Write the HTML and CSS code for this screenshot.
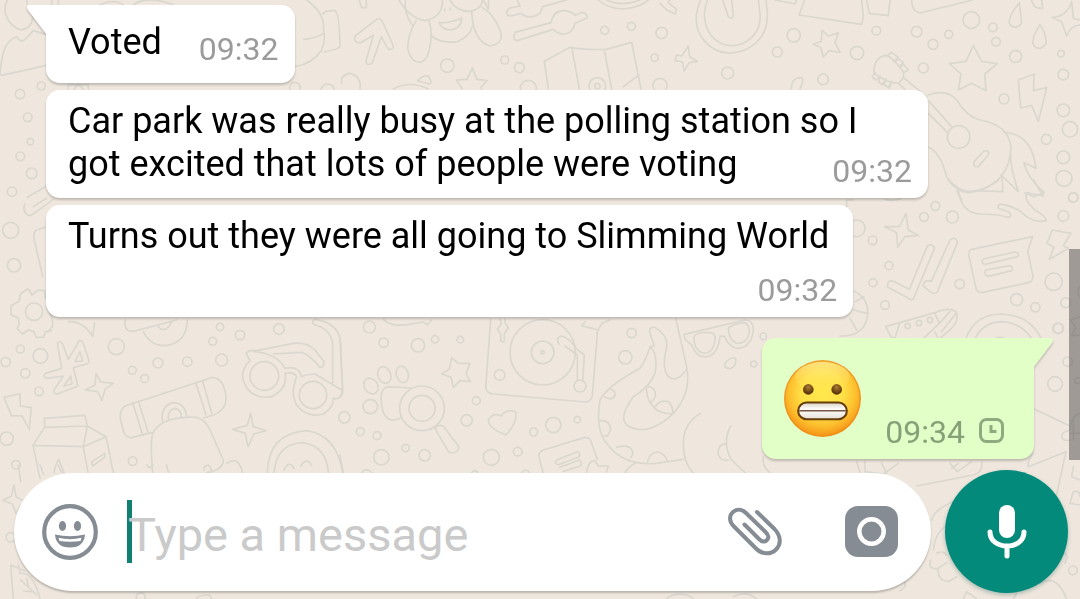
FILE: index.html
```html
<!DOCTYPE html>
<html lang="en">
<head>
<meta charset="utf-8">
<meta name="viewport" content="width=device-width, initial-scale=1">
<title>Chat</title>
<link rel="stylesheet" href="styles.css">
</head>
<body>
<div class="chat">
<svg class="wallpaper" viewBox="0 0 1080 599" preserveAspectRatio="xMinYMin slice" aria-hidden="true">
  <!-- top left -->
  <g transform="scale(.33333)">
    <path d="M22 0C5 30 20 75 62 90Q98 85 98 45M0 225C5 150 20 120 50 110Q62 130 75 118L100 92L140 104M4 226L140 196M82 592L140 558M75 612Q65 635 85 646Q95 648 105 638L160 598M100 620L140 595M140 680L110 690Q98 698 103 720L128 830M80 0L82 12M155 0V14M175 0V14M300 14Q340 -5 370 14M400 14Q440 -15 520 14"/>
    <path d="M88 870l8 15 18-15 20 2 2 22M88 870l-5-3-22 15-4 22-24 14v26l22 10 2 20-6 12 16 16 18-12 16 4 8 18h22l6-18 18-2M205 965Q250 962 278 1010L284 968M140 920q20 30 18 58l-14 18"/>
    <circle cx="102" cy="935" r="26"/><circle cx="60" cy="282" r="14"/><circle cx="124" cy="258" r="12"/><circle cx="83" cy="352" r="13"/><circle cx="91" cy="425" r="10"/><circle cx="61" cy="469" r="13"/><circle cx="95" cy="520" r="16"/><circle cx="36" cy="575" r="14"/><circle cx="32" cy="691" r="24"/><circle cx="42" cy="796" r="20"/>
    <path d="M205 268v-14h60v14M222 268q12-24 28 0"/>
  </g>
  <!-- top centre -->
  <g transform="translate(280 0) scale(.33333)">
    <path d="M80 0Q135 40 130 85Q138 120 125 150Q100 190 45 200M70 118Q110 115 130 100M128 42Q135 30 165 32Q178 38 180 140Q175 148 132 156M238 0L243 20Q250 28 260 20L258 0"/>
    <path d="M225 108L290 58Q302 52 308 66L340 138Q340 150 325 148L304 110L277 188Q265 200 257 186L280 106L240 129Q224 128 223 114Z"/>
    <path d="M357 0Q390 55 435 62Q490 50 487 0M377 0Q370 40 400 80M408 62Q380 110 384 150Q395 188 420 187Q450 180 453 110Q455 85 447 62M510 0Q530 35 570 34Q605 28 608 0M575 35Q580 125 630 138Q675 130 660 90Q640 40 605 22M455 108Q480 130 530 126Q570 110 577 80M610 0L625 28L626 0M478 68Q510 70 545 54Q545 85 510 90Q485 88 478 68ZM494 27v6M511 25v6"/>
    <path d="M712 0L720 18L690 24Q675 35 682 45Q690 52 722 40Q750 62 780 40L788 20L860 0M705 97L813 68Q820 30 855 32Q878 36 886 46L905 37Q925 40 920 55L885 70Q880 100 848 103Q830 100 820 88L712 122Q695 120 705 97ZM955 0Q980 25 1030 27Q1080 22 1105 0M980 0Q1025 22 1080 0M1140 10L1160 30L1185 42L1190 28L1165 8L1170 0"/>
    <path d="M805 267L793 184L870 142Q910 150 978 148L1055 127L1083 267M876 145L898 267M973 150L995 267M1030 260L1077 225"/>
    <path d="M577 204l14 34 30 4-18 20 2 6M577 204l-16 34-32 2 18 26M340 267Q390 240 445 267M185 250Q180 225 210 220Q245 228 240 268M413 243Q425 225 445 228Q458 248 450 252Z"/>
    <circle cx="502" cy="197" r="20"/><circle cx="674" cy="180" r="12"/><circle cx="718" cy="203" r="15"/><circle cx="974" cy="91" r="12"/><circle cx="1054" cy="79" r="12"/><circle cx="1145" cy="99" r="17"/><circle cx="1124" cy="173" r="11"/><circle cx="952" cy="258" r="25"/><circle cx="952" cy="258" r="8"/><circle cx="745" cy="265" r="24"/><circle cx="1140" cy="256" r="21"/><circle cx="45" cy="263" r="16"/><circle cx="143" cy="272" r="20"/>
  </g>
  <!-- top right -->
  <g transform="translate(680 0) scale(.33333)">
    <path d="M62 0Q30 75 75 125Q120 175 190 152Q265 120 262 40L258 0M82 0Q60 55 92 105Q130 150 185 132Q245 105 240 40L235 0M128 0L145 50Q155 60 160 48L155 0M25 138L29 170L52 184L28 188L12 213L8 186L-15 182L-10 165L5 168ZM285 0L345 12L350 0M374 0L357 45L545 73L550 50L545 0M560 0L568 40L625 47L630 0M695 0Q695 35 720 39L878 0M1055 0Q1060 28 1088 25L1085 0M1018 8Q980 55 990 75Q1010 90 1025 70ZM1080 74Q1050 120 1062 138Q1080 155 1098 132Q1100 105 1080 74Z"/>
    <path d="M1175 5L1180 55L1200 60M1175 5Q1160 50 1116 52L1145 66L1160 108Q1170 78 1200 75M426 90L445 108L475 98L465 128L480 157L447 152L430 171L422 142L399 133L424 124ZM880 136L905 184L952 191L914 222L918 272L875 250L835 270L843 222L808 191L858 184Z"/>
    <path d="M1063 222L1015 240L1022 324L1055 316L1075 364L1100 263L1060 272ZM334 267Q335 230 366 233Q372 245 360 267"/>
    <path d="M582 210Q585 170 620 166Q640 175 670 215Q675 235 655 250Q625 250 582 220ZM620 168L635 157L655 172L640 185L658 178L670 188L658 202L672 194L685 210L670 218M586 218L576 230L588 240L600 228L596 246L606 254L618 236L612 255L625 262L635 244L628 265M672 234L740 290M655 250L675 268M745 285Q800 265 830 300Q860 350 900 360Q985 375 993 440Q990 540 900 570Q840 588 800 530Q780 455 745 442M745 302L815 380M745 340L803 398"/>
    <circle cx="836" cy="411" r="34"/><path d="M882 485L912 453Q930 450 925 465L895 500Q878 502 882 485ZM972 397Q1055 400 1068 505L1032 488Q1040 530 1093 578L1060 590L1035 578M992 465Q990 500 1015 575L963 525Q970 550 968 575L885 572M830 572L845 600"/>
    <circle cx="341" cy="106" r="20"/><circle cx="292" cy="156" r="15"/><circle cx="143" cy="219" r="18"/><circle cx="429" cy="238" r="16"/><circle cx="589" cy="92" r="13"/><circle cx="531" cy="159" r="20"/><circle cx="710" cy="95" r="16"/><circle cx="759" cy="133" r="15"/><circle cx="806" cy="103" r="12"/><circle cx="874" cy="60" r="25"/><circle cx="939" cy="82" r="13"/><circle cx="948" cy="125" r="13"/><circle cx="730" cy="204" r="15"/><circle cx="1007" cy="169" r="18"/><circle cx="1143" cy="161" r="10"/><circle cx="1150" cy="224" r="16"/><circle cx="972" cy="297" r="15"/><circle cx="1150" cy="331" r="19"/><circle cx="1099" cy="418" r="15"/><circle cx="1170" cy="388" r="23"/><circle cx="1150" cy="472" r="19"/><circle cx="1152" cy="535" r="24"/><circle cx="1180" cy="592" r="14"/>
  </g>
  <!-- middle right -->
  <g transform="translate(840 180) scale(.33333)">
    <path d="M325 0Q350 35 385 38Q440 30 475 0M355 32Q365 100 420 102Q470 102 505 112Q520 108 505 95L475 85Q470 70 490 74Q530 80 560 110Q590 130 618 122Q620 110 585 90Q550 60 560 38L610 48L580 0M198 100L205 150L234 166L195 170L173 202L170 158L134 140L178 140Z"/>
    <path d="M262 198Q275 188 284 204L222 352Q220 364 205 355L142 320Q142 298 160 304L208 328ZM330 180Q345 168 353 186L292 336Q284 345 270 335L250 318Q250 302 266 302L274 304ZM395 208L578 170L563 212L579 290Q578 305 565 308L425 338Q410 335 408 325L387 230Q385 212 395 208ZM430 237L525 216Q540 218 533 230L435 253Q420 250 430 237ZM437 270L510 257Q522 262 515 272L445 289Q430 285 437 270ZM637 150L693 160L670 197L686 205L628 238L642 202L621 190Z"/>
    <path d="M137 440L285 398Q330 380 348 395Q360 420 330 450L298 476M137 440L152 470L165 475L178 432M285 400L298 430L330 395M298 430L250 476M285 456L295 476M348 400L305 455M42 333Q95 360 80 420Q65 470 0 468M45 365L72 350M42 390L80 400M30 415L50 450M377 476Q405 402 485 402Q570 405 604 476M405 476Q430 425 490 425Q545 430 575 476M465 476q15-8 30 0M20 100V60L38 60M135 58Q160 65 185 55"/>
    <circle cx="203" cy="438" r="8"/><circle cx="237" cy="429" r="8"/><circle cx="270" cy="420" r="8"/>
    <circle cx="286" cy="78" r="13"/><circle cx="252" cy="111" r="13"/><circle cx="337" cy="111" r="18"/><circle cx="98" cy="181" r="13"/><circle cx="50" cy="145" r="25"/><circle cx="147" cy="257" r="12"/><circle cx="99" cy="308" r="12"/><circle cx="135" cy="375" r="13"/><circle cx="359" cy="312" r="14"/><circle cx="530" cy="359" r="18"/><circle cx="586" cy="382" r="14"/><circle cx="641" cy="305" r="26"/><circle cx="677" cy="368" r="15"/><circle cx="654" cy="445" r="16"/><circle cx="670" cy="108" r="16"/><circle cx="699" cy="53" r="14"/>
    <path d="M720 320q-15 15 0 30M692 420l28-10M692 420l15 22-12 25 25-2"/>
  </g>
  <!-- bottom left -->
  <g transform="translate(0 300) scale(.33333)">
    <path d="M172 130Q180 120 188 132L205 178L238 122Q245 120 250 130L267 182Q268 192 255 193L220 203L234 258L172 282Q160 282 162 270L190 228L140 235Q125 228 137 220L185 205ZM240 155L248 183L225 185ZM212 228L216 252L192 258ZM288 220L302 246L340 250L315 268L306 302L293 275L256 270L285 255ZM12 292L60 281L61 318L94 323L88 388L66 348L34 347ZM133 355L255 346L262 378L134 382ZM134 382L99 436L250 440L262 378L318 410L250 440M99 436L120 535M250 440L264 518M318 410L340 518M162 518Q165 495 176 478L192 518M275 485L314 460V472L278 498Z"/>
    <path d="M375 318Q352 335 366 375Q372 415 395 413L455 398M375 318L635 233Q670 230 678 290Q680 330 640 345L610 354M398 308L428 405M415 303L445 398M588 250L618 345M608 243L635 340M488 365Q480 320 518 308Q555 308 560 350M505 358Q502 330 525 325Q545 330 544 350M458 518Q450 430 458 400Q480 355 560 352Q610 345 630 390L670 480Q670 510 620 518M612 510Q610 495 625 496Q638 505 632 518M680 490Q715 465 728 518"/>
    <path d="M738 160Q745 148 770 152L880 130Q920 125 945 150L972 185Q972 205 960 202Q920 155 900 157L820 162M738 160L750 182Q715 215 735 255Q760 300 815 290Q865 265 855 220Q880 215 890 230Q870 280 890 315Q920 355 970 342Q1000 325 1000 295Q1030 300 1025 270L945 222Q910 225 905 230Q895 195 855 205Q840 175 795 160L760 154M998 248V130Q990 85 945 75Q930 65 945 58Q1020 70 1022 130L1028 270M752 340L760 380L798 392L762 402L744 440L736 400L698 388L742 376ZM802 518Q805 400 920 392Q1010 405 1028 518M822 518Q830 430 910 428Q980 440 985 518M852 510q15-32 30-5M902 498q18-28 33-2M376 60Q370 95 400 94L530 60M430 95Q450 137 495 137Q560 130 562 60M475 80Q495 105 518 62"/>
    <circle cx="793" cy="228" r="43"/><circle cx="939" cy="285" r="41"/><circle cx="121" cy="168" r="22"/><circle cx="61" cy="147" r="12"/><circle cx="17" cy="186" r="14"/><circle cx="76" cy="220" r="14"/><circle cx="117" cy="274" r="13"/><circle cx="20" cy="416" r="20"/><circle cx="48" cy="494" r="13"/><circle cx="349" cy="140" r="24"/><circle cx="397" cy="211" r="12"/><circle cx="434" cy="236" r="12"/><circle cx="474" cy="189" r="15"/><circle cx="562" cy="185" r="14"/><circle cx="665" cy="180" r="18"/><circle cx="638" cy="124" r="12"/><circle cx="660" cy="81" r="11"/><circle cx="720" cy="105" r="14"/><circle cx="837" cy="87" r="16"/><circle cx="1033" cy="352" r="17"/><circle cx="398" cy="483" r="13"/>
  </g>
  <!-- bottom centre -->
  <g transform="translate(340 300) scale(.33333)">
    <path d="M130 58Q150 80 200 74L250 66L262 75L275 60M213 264L145 260Q120 265 124 300Q125 355 158 361L186 354M285 385L325 455Q340 465 355 450Q360 440 345 425L310 378Q290 372 285 385ZM335 173L355 190L390 190L378 220L391 245L360 242L340 263L333 232L305 222L328 208ZM498 405Q445 385 445 360Q460 335 483 348Q500 325 526 335Q535 365 498 405Z"/>
    <ellipse cx="93" cy="258" rx="20" ry="25" transform="rotate(-35 93 258)"/><ellipse cx="133" cy="225" rx="19" ry="26" transform="rotate(-20 133 225)"/><ellipse cx="187" cy="223" rx="18" ry="25" transform="rotate(-15 187 223)"/><ellipse cx="91" cy="320" rx="22" ry="21"/>
    <circle cx="246" cy="325" r="67"/><circle cx="246" cy="325" r="39"/><circle cx="608" cy="157" r="98"/><circle cx="608" cy="157" r="34"/><circle cx="608" cy="157" r="5"/>
    <path d="M452 58L437 262Q440 280 460 282L735 306Q755 305 757 285L773 90L758 85L725 78L735 65M770 100L785 70L810 60M480 58L485 70L472 88L482 102V122Q488 130 493 122V100L505 84L495 68V58M657 132Q645 112 665 108Q690 115 708 145L733 165L728 245M675 138L712 165V242M602 492L596 465Q598 455 610 450L735 412Q748 412 752 422L772 478M602 492L610 518M650 480L712 455Q725 462 715 472L655 494Q640 490 650 480ZM660 502L718 480Q730 490 720 498L670 514M740 518Q745 480 765 482L775 498L805 498L800 516"/>
    <circle cx="720" cy="258" r="18"/>
    <path d="M930 140Q955 160 945 220Q930 260 880 290Q835 350 860 375Q920 415 1000 340Q1055 280 1040 200L1008 58M930 140Q920 175 900 205Q800 260 780 300Q765 390 800 430Q850 500 950 490L1030 478M930 140L943 138L930 100Q925 80 945 82Q990 110 978 150Q965 205 985 230Q1010 250 1038 210M920 258Q950 262 946 290Q940 300 935 305M920 258Q915 300 950 330Q980 345 1000 340M945 320Q960 298 985 305Q1000 320 998 340M793 290Q815 305 826 285Q825 270 812 268M780 362Q808 360 812 385Q808 410 793 408M830 442Q870 430 878 455Q880 465 872 472M922 486Q930 455 955 456Q980 465 982 485M1082 340Q1030 370 1030 430Q1030 490 1060 518M1172 378Q1145 430 1175 480L1215 518M1158 430Q1130 435 1135 465Q1145 485 1165 480M855 518Q865 500 885 490M1270 470Q1265 500 1290 518"/>
    <path d="M1033 103L1215 60Q1240 60 1240 90Q1235 140 1195 145Q1165 142 1155 110L1140 108Q1135 165 1100 170Q1070 175 1055 135L1035 118ZM1062 110Q1070 95 1110 98Q1128 98 1125 120Q1120 160 1090 160Q1060 150 1062 110ZM1165 85Q1180 70 1215 68Q1230 75 1228 100Q1220 132 1190 130Q1165 120 1165 85ZM1155 190Q1170 170 1187 175Q1190 200 1170 206Q1150 205 1155 190Z"/>
    <circle cx="88" cy="81" r="18"/><circle cx="131" cy="128" r="14"/><circle cx="234" cy="136" r="20"/><circle cx="285" cy="118" r="11"/><circle cx="361" cy="119" r="10"/><circle cx="409" cy="302" r="12"/><circle cx="380" cy="361" r="17"/><circle cx="479" cy="225" r="16"/><circle cx="640" cy="375" r="23"/><circle cx="712" cy="359" r="10"/><circle cx="581" cy="396" r="12"/><circle cx="454" cy="472" r="24"/><circle cx="533" cy="455" r="13"/><circle cx="254" cy="466" r="17"/><circle cx="197" cy="444" r="11"/><circle cx="124" cy="472" r="23"/><circle cx="61" cy="395" r="12"/><circle cx="111" cy="407" r="12"/><circle cx="875" cy="99" r="14"/><circle cx="856" cy="172" r="20"/><circle cx="1241" cy="192" r="9"/><circle cx="1270" cy="109" r="10"/>
    <path d="M0 120L8 280L-5 295M0 465L10 518M65 518q15-18 30 0M395 518q10-12 20 0M545 518q12-16 24 0"/>
  </g>
  <!-- bottom right -->
  <g transform="translate(840 320) scale(.33333)">
    <path d="M584 268L690 318M690 330Q665 335 665 350Q670 365 690 360M678 395L565 440Q560 425 580 400M678 395L640 570M75 424V455L130 462L175 430M125 430L140 460M330 430L352 455L395 425M335 445L355 430M50 424L60 458M230 498L400 465Q430 458 425 425M275 600Q280 570 345 542M280 690Q285 640 315 620M272 720Q262 750 295 745L320 728M295 745Q290 780 325 785L350 770M290 700Q310 690 320 705M700 440L695 470L720 480M690 550L700 515Q720 510 720 530M690 550L720 555M600 790Q650 760 680 837M370 837L380 815L410 837M520 837L530 820M665 695Q690 700 675 730M190 780Q205 800 180 812M720 280Q690 290 690 330M700 300v60M690 340H720"/>
    <circle cx="645" cy="192" r="22"/><circle cx="683" cy="125" r="14"/><circle cx="699" cy="751" r="13"/><circle cx="655" cy="25" r="15"/><circle cx="714" cy="182" r="9"/>
  </g>
  <!-- beside the composer -->
  <g transform="translate(0 465) scale(.33333)">
    <path d="M42 60L48 95L72 108M42 60L34 94L8 106L38 118L48 145L62 120M40 402L32 300L75 318M55 300L60 325Q100 320 120 402M62 345L110 390M80 340L85 365M70 378L95 380M410 402q-5-18 14-18 16 2 10 18M590 402q0-12 40-12l5 12M55 0L62 50M120 0L130 26M175 0L185 22M440 0Q450 15 460 0M500 0L505 22M2000 402q10-14 40-14t40 14M2200 395q40-20 70 7"/>
    <circle cx="32" cy="217" r="14"/>
  </g>
</svg>

<main class="messages">
  <article class="bubble bubble-in bubble-row">
    <svg class="tail tail-left" viewBox="0 0 20 30" aria-hidden="true"><path d="M20 0H2Q-1 1 1 5L20 30Z"/></svg>
    <p class="text">Voted</p>
    <time class="time">09:32</time>
  </article>
  <article class="bubble bubble-wide">
    <p class="text">Car park was really busy at the polling station so I got excited that lots of people were voting <time class="time">09:32</time></p>
  </article>
  <article class="bubble bubble-stacked">
    <p class="text">Turns out they were all going to Slimming World</p>
    <time class="time">09:32</time>
  </article>
  <article class="bubble bubble-out">
    <svg class="tail tail-right" viewBox="0 0 20 30" aria-hidden="true"><path d="M0 0H18Q21 1 19 5L0 30Z"/></svg>
    <svg class="emoji" viewBox="0 0 76 76" role="img" aria-label="Grimacing face">
      <defs>
        <linearGradient id="rim" x1="0" y1="0" x2="0" y2="1"><stop offset="0" stop-color="#eda02c"/><stop offset="1" stop-color="#f18c14"/></linearGradient>
        <radialGradient id="face" cx=".5" cy=".42" r=".58"><stop offset="0" stop-color="#ffe94c"/><stop offset=".5" stop-color="#ffdf45"/><stop offset=".8" stop-color="#fcbc2b"/><stop offset="1" stop-color="#f5961a"/></radialGradient>
        <linearGradient id="shine" x1="0" y1="0" x2="0" y2="1"><stop offset="0" stop-color="#fff3b0" stop-opacity=".6"/><stop offset="1" stop-color="#ffe760" stop-opacity="0"/></linearGradient>
        <radialGradient id="eye" cx=".5" cy=".3" r=".6"><stop offset="0" stop-color="#ab7a35"/><stop offset="1" stop-color="#593408"/></radialGradient>
        <linearGradient id="teeth" x1="0" y1="0" x2="0" y2="1"><stop offset="0" stop-color="#d9d2c4"/><stop offset=".4" stop-color="#fff"/><stop offset="1" stop-color="#e4ded6"/></linearGradient>
      </defs>
      <circle cx="38" cy="38" r="38" fill="url(#rim)"/>
      <circle cx="38" cy="38" r="36.5" fill="url(#face)"/>
      <ellipse cx="38" cy="17" rx="27" ry="15" fill="url(#shine)"/>
      <circle cx="24" cy="29" r="5.2" fill="url(#eye)"/><circle cx="52" cy="29" r="5.2" fill="url(#eye)"/>
      <rect x="14" y="42" width="48" height="16.500" rx="8.200" fill="url(#teeth)" stroke="#643d08" stroke-width="2"/>
      <path d="M15 50H61" stroke="#79553f" stroke-width="1.500"/>
    </svg>
    <time class="time">09:34</time>
    <svg class="pending" viewBox="0 0 25 25" role="img" aria-label="Pending"><rect x="1.500" y="1.500" width="22" height="22" rx="6"/><path d="M12 7V13.500H17.500"/></svg>
  </article>
</main>

<form class="composer">
  <div class="field">
    <button class="icon-button" type="button" aria-label="Emoji">
      <svg class="smiley" viewBox="0 0 56 56"><circle cx="28" cy="28" r="25.800" fill="none" stroke="#868c94" stroke-width="4.200"/><ellipse cx="20.500" cy="22" rx="3.600" ry="5"/><ellipse cx="35.500" cy="22" rx="3.600" ry="5"/><path d="M13 30.500Q28 34 43 30.500Q42 43.500 28 43.500Q14 43.500 13 30.500Z"/><path d="M16.500 33.800Q28 36.500 39.500 33.800L38.500 37Q28 38.500 17.500 37Z" fill="#fff"/></svg>
    </button>
    <div class="entry"><input class="message-input" type="text" placeholder="Type a message" aria-label="Message"></div>
    <button class="icon-button attach" type="button" aria-label="Attach">
      <svg class="clip" viewBox="0 0 54 50"><path d="M29 5L46.500 22C53 29 53.500 37 48 42.500C42.500 48 34 47.500 28 41.500L5.500 19C1 14.500 1 8.500 5 5C9 1.500 14 2 18 6L37.500 25C41 28.500 41 31 39 33C36.500 35.500 34 35 31 32L16.500 17.500"/></svg>
    </button>
    <button class="icon-button" type="button" aria-label="Camera">
      <svg class="camera" viewBox="0 0 53 51"><rect width="53" height="51" rx="13"/><circle cx="26.500" cy="25.500" r="12.200" fill="none" stroke="#fff" stroke-width="4.500"/></svg>
    </button>
  </div>
  <button class="mic-button" type="button" aria-label="Record voice message">
    <svg class="mic" viewBox="0 0 40 54"><rect x="12" y="0" width="16" height="33" rx="8" fill="#fff"/><path d="M3 27C3 36 11 41 20 41S37 36 37 27M20 41V51" fill="none" stroke="#fff" stroke-width="5" stroke-linecap="round"/></svg>
  </button>
</form>
<div class="scroll-thumb"></div>
</div>
</body>
</html>
```
FILE: styles.css
```css
* { box-sizing: border-box; }
body { margin: 0; font-family: Roboto, "Liberation Sans", sans-serif; }
.chat {
  position: relative;
  min-height: 100vh;
  padding-top: 5px;
  overflow: hidden;
  background: #efe7de;
}
.wallpaper {
  position: absolute;
  inset: 0;
  width: 100%;
  height: 100%;
  fill: none;
  stroke: #dad7cf;
  stroke-width: 5;
  stroke-linejoin: round;
  stroke-linecap: round;
}
.messages {
  position: relative;
  display: flex;
  flex-direction: column;
  align-items: flex-start;
  gap: 7px;
  padding: 0 46px;
}
.bubble {
  position: relative;
  max-width: calc(100% - 106px);
  padding: 10px 16px 8px 22px;
  border-radius: 14px;
  background: #fff;
  filter: drop-shadow(0 2px 1px rgba(0, 0, 0, 0.2));
}
.bubble-row {
  display: flex;
  align-items: flex-end;
  gap: 37px;
  padding-top: 16px;
  padding-bottom: 15px;
}
.bubble-in { border-top-left-radius: 0; }
.bubble-wide .text {
  display: flow-root;
  margin: 0;
}
.bubble-wide .time {
  float: right;
  margin-top: 9px;
}
.bubble-stacked {
  display: flex;
  flex-direction: column;
  gap: 9px;
}
.bubble-stacked .text { margin-right: 8px; }
.bubble-stacked .time { align-self: flex-end; }
.bubble-out {
  display: flex;
  align-items: flex-end;
  align-self: flex-end;
  margin-top: 14px;
  padding: 22px 30px 8px 22px;
  border-top-right-radius: 0;
  background: #e1ffc7;
}
.text {
  margin: 0 0 4px;
  font-size: 36px;
  line-height: 43px;
  color: #000;
}
.time {
  font-size: 32px;
  line-height: 38px;
  color: #9b9b9b;
}
.bubble-out .time { margin: 0 14px 0 24px; color: #87a077; }
.emoji { width: 77px; height: 77px; margin-bottom: 14px; }
.pending {
  width: 25px;
  height: 25px;
  margin-bottom: 8px;
  fill: none;
  stroke: #90aa80;
  stroke-width: 3;
}
.tail {
  position: absolute;
  top: 0;
  width: 20px;
  height: 30px;
}
.tail-left { right: 100%; margin-right: -1px; fill: #fff; }
.tail-right { left: 100%; margin-left: -1px; fill: #e1ffc7; }
.composer {
  position: relative;
  display: flex;
  align-items: center;
  gap: 14px;
  padding: 11px 12px 4px 14px;
}
.field {
  display: flex;
  flex: 1;
  align-items: center;
  min-width: 0;
  height: 118px;
  padding: 0 33px 0 28px;
  border-radius: 59px;
  background: #fff;
  box-shadow: 0 2px 2px rgba(0, 0, 0, 0.22);
}
.icon-button, .mic-button {
  flex: none;
  display: grid;
  place-items: center;
  padding: 0;
  border: 0;
  background: none;
}
.icon-button svg { fill: #868c94; }
.smiley { width: 56px; height: 56px; }
.camera { width: 53px; height: 51px; }
.icon-button .clip {
  width: 54px;
  height: 50px;
  overflow: visible;
  fill: none;
  stroke: #868c94;
  stroke-width: 4;
  stroke-linecap: round;
}
.attach { margin-right: 63px; }
.entry {
  position: relative;
  flex: 1;
  min-width: 0;
  margin-left: 29px;
}
.entry::before {
  content: "";
  position: absolute;
  top: 0;
  left: 0;
  width: 5px;
  height: 63px;
  background: #128071;
}
.message-input {
  position: relative;
  display: block;
  width: 100%;
  height: 63px;
  padding: 5px 0 0 1px;
  border: 0;
  outline: 0;
  background: transparent;
  font: 47px Roboto, "Liberation Sans", sans-serif;
  color: #000;
}
.message-input::placeholder { color: #cacaca; opacity: 1; }
.mic-button {
  width: 123px;
  height: 123px;
  border-radius: 50%;
  background: #038a7b;
  box-shadow: 0 2px 4px rgba(0, 80, 70, 0.3);
}
.mic { width: 40px; height: 54px; }
.scroll-thumb {
  position: absolute;
  top: 249px;
  right: 0;
  width: 11px;
  height: 211px;
  background: rgba(80, 78, 75, 0.5);
}
```
